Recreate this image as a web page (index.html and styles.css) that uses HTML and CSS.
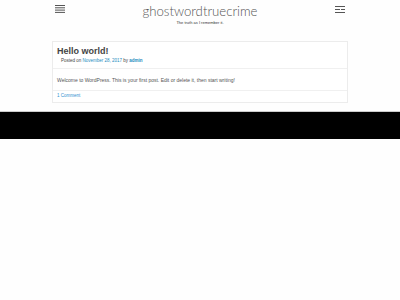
FILE: index.html
```html
<!DOCTYPE html>
<html lang="en">
<head>
  <meta charset="UTF-8" />
  <title>ghostwordtruecrime</title>
  <link rel="stylesheet" href="styles.css">
</head>
<body>

  <header class="site-header">
    <button class="menu-toggle" aria-label="Menu">
      <svg width="10" height="8" viewBox="0 0 10 8">
        <rect x="0" y="0" width="10" height="1" fill="#555"/>
        <rect x="0" y="2.3" width="10" height="1" fill="#555"/>
        <rect x="0" y="4.6" width="10" height="1" fill="#555"/>
        <rect x="0" y="6.9" width="10" height="1" fill="#555"/>
      </svg>
    </button>

    <div class="branding">
      <h1 class="site-title">ghostwordtruecrime</h1>
      <p class="site-description">The truth as I remember it.</p>
    </div>

    <button class="sidebar-toggle" aria-label="Sidebar">
      <svg width="10" height="7" viewBox="0 0 10 7">
        <rect x="0" y="0" width="10" height="1" fill="#555"/>
        <rect x="0" y="3" width="5" height="1" fill="#555"/>
        <rect x="6" y="3" width="4" height="1" fill="#555"/>
        <rect x="0" y="6" width="10" height="1" fill="#555"/>
      </svg>
    </button>
  </header>

  <main class="site-main">
    <article class="post">
      <header class="entry-header">
        <h2 class="entry-title">Hello world!</h2>
        <div class="entry-meta">
          Posted on <a href="#">November 28, 2017</a> by <a href="#" class="author">admin</a>
        </div>
      </header>
      <div class="entry-content">
        <p>Welcome to WordPress. This is your first post. Edit or delete it, then start writing!</p>
      </div>
      <footer class="entry-footer">
        <a href="#">1 Comment</a>
      </footer>
    </article>
  </main>

  <footer class="site-footer"></footer>

</body>
</html>
```

FILE: styles.css
```css
body {
  margin: 0;
  background: #fefefe;
  font-family: "Liberation Sans", Arial, sans-serif;
  color: #555;
}

.site-header {
  display: flex;
  justify-content: space-between;
  align-items: flex-start;
  padding: 5px 55px 0 55px;
  height: 36px;
  box-sizing: border-box;
}

.menu-toggle,
.sidebar-toggle {
  background: none;
  border: none;
  padding: 0;
  margin: 0;
  line-height: 0;
}

.sidebar-toggle {
  margin-top: 1px;
}

.branding {
  text-align: center;
}

.site-title {
  margin: -2px 0 0;
  font-family: Lato, sans-serif;
  font-weight: 300;
  font-size: 13.2px;
  line-height: 16px;
  color: #555;
}

.site-description {
  margin: 1px 0 0;
  font-size: 4px;
  line-height: 5px;
  color: #333;
}

.site-main {
  padding: 5px 52px 8px 52px;
}

.post {
  border: 1px solid #ececec;
  background: #fff;
}

.entry-header {
  padding: 4px 4px 4px 4px;
  border-bottom: 1px solid #f0f0f0;
}

.entry-title {
  margin: 0;
  font-size: 9px;
  line-height: 11px;
  font-weight: bold;
  color: #444;
}

.entry-meta {
  margin: 1px 0 0 4px;
  font-size: 4.5px;
  line-height: 6px;
  color: #444;
}

.entry-meta a {
  color: #1e8cbe;
  text-decoration: none;
}

.entry-meta .author {
  font-weight: bold;
}

.entry-content {
  padding: 8px 4px 6px;
  border-bottom: 1px solid #f0f0f0;
}

.entry-content p {
  margin: 0;
  font-size: 5px;
  line-height: 7px;
  color: #555;
}

.entry-footer {
  padding: 2px 4px 3px;
  font-size: 4.5px;
  line-height: 6px;
}

.entry-footer a {
  color: #2f8fcf;
  text-decoration: none;
}

.site-footer {
  height: 27px;
  background: #000;
  border-top: 1px solid #ccc;
}
```
